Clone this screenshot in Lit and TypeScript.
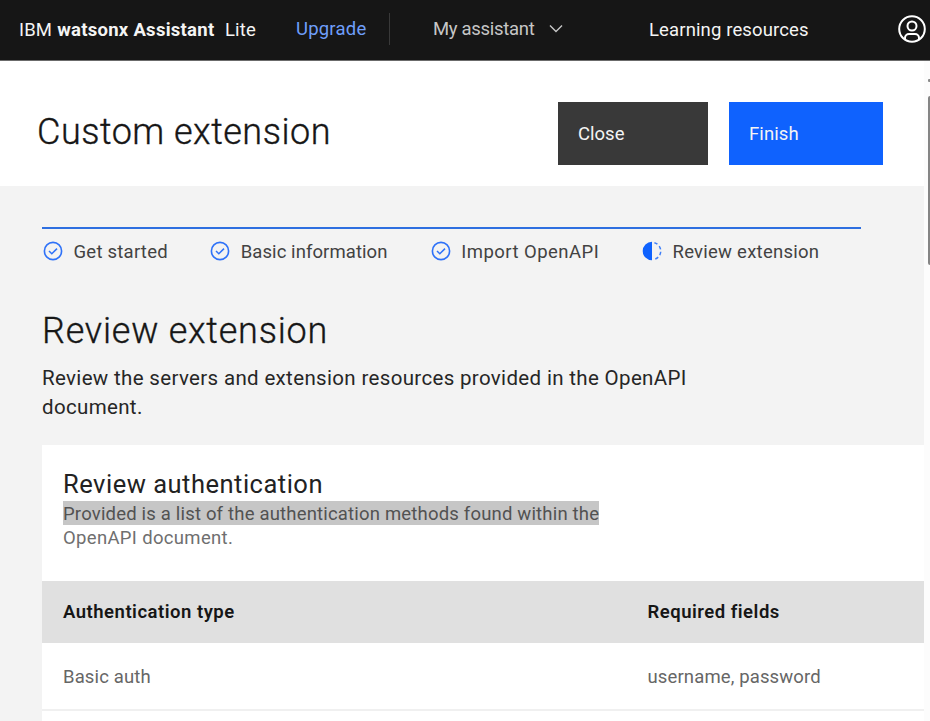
import { LitElement, html, css, svg } from "lit";
import { customElement } from "lit/decorators.js";

const check = svg`<circle cx="10" cy="10" r="8.6" fill="none" stroke="#2f72f8" stroke-width="1.6"/><path d="M6 10 8.8 12.7 14 7.6" fill="none" stroke="#2f72f8" stroke-width="1.5"/>`;
const current = svg`<path d="M10 .7a9.3 9.3 0 0 0 0 18.6z" fill="#0f62fe"/><path d="M12.4 1.7a8.6 8.6 0 0 1 0 16.6" fill="none" stroke="#3f7ff8" stroke-width="1.5" stroke-dasharray="3.4 2.5"/>`;

const steps = [
  { label: "Get started", cls: "s1" },
  { label: "Basic information", cls: "s2" },
  { label: "Import OpenAPI", cls: "s3" },
  { label: "Review extension", cls: "s4" },
];

@customElement("app-root")
export class AppRoot extends LitElement {
  static styles = css`
    :host { display: flex; flex-direction: column; height: 721px; overflow: hidden; background: #fff; color: #161616;
      font-family: Roboto, "Open Sans", sans-serif; font-size: 18.5px; line-height: 24px; white-space: nowrap; }
    * { box-sizing: border-box; }
    svg { display: block; flex: none; }
    header { height: 61px; flex: none; display: flex; align-items: center; background: #161616; border-bottom: 1px solid #6b6b6b; color: #f4f4f4; padding-left: 19px; }
    .brand { width: 277px; display: flex; letter-spacing: .15px; }
    .brand b { margin: 0 10.5px 0 5px; letter-spacing: .27px; }
    .upgrade { color: #6f9ffb; width: 93px; letter-spacing: .2px; padding-bottom: 2px; }
    .switch { border-left: 1px solid #393939; height: 32px; width: 260px; margin-bottom: 3px; padding-left: 43px; display: flex; align-items: center; color: #c6c6c6; gap: 14.5px; letter-spacing: -.3px; }
    .learn { width: 249px; letter-spacing: .13px; }
    .user { margin-bottom: 2px; }
    .body { flex: 1; display: flex; min-height: 0; }
    .scroll { flex: 1; background: #f3f3f3; min-width: 0; overflow: hidden; }
    .gutter { width: 6px; background: #fcfcfc; display: flex; flex-direction: column; align-items: flex-end; overflow: hidden; padding-top: 18px; }
    .arrow { width: 2px; height: 3px; background: #8b8b8b; border-radius: 1px 0 0 1px; }
    .thumb { width: 2px; height: 169px; background: #858585; margin-top: 14px; border-radius: 2px 0 0 2px; }
    .title { height: 125px; background: #fff; display: flex; align-items: center; padding: 20px 41px 0 37px; }
    h1, h2, h3, p { margin: 0; font-weight: 400; }
    h1, h2 { font-size: 36px; line-height: 44px; font-weight: 300; -webkit-text-stroke: .35px #161616; }
    h1 { flex: 1; letter-spacing: .5px; padding-bottom: 4px; }
    h2 { letter-spacing: .78px; }
    .btn { height: 63px; width: 150px; background: #393939; color: #f4f4f4; padding-left: 20px; display: flex; align-items: center; }
    .primary { width: 154px; margin-left: 21px; background: #0f62fe; letter-spacing: .1px; }
    .content { padding: 41px 0 0 42px; }
    .steps { width: 819px; border-top: 2px solid #2e6fe0; display: flex; padding: 11px 0 0 1px; height: 82px; color: #424242; }
    .step { display: flex; gap: 10.5px; }
    .step svg { margin-top: 1px; }
    .s1 { width: 167.2px; letter-spacing: .24px; }
    .s2 { width: 220.5px; letter-spacing: .08px; }
    .s3 { width: 211.3px; letter-spacing: .47px; }
    .s4 { letter-spacing: .25px; }
    .lead { color: #262626; font-size: 20.5px; line-height: 29px; margin-top: 11px; width: 680px; white-space: normal; letter-spacing: .34px; }
    .card { background: #fff; margin-top: 23px; height: 290px; }
    .intro { height: 136px; padding: 23px 0 0 21px; color: #6f6f6f; }
    h3 { font-size: 25.5px; line-height: 33px; color: #222; letter-spacing: .5px; }
    mark { background: #c6c6c6; color: #525252; display: block; width: max-content; height: 24px; line-height: 26px; letter-spacing: .185px; }
    .rest { letter-spacing: .33px; line-height: 26px; }
    .row { display: grid; grid-template-columns: 584.5px 1fr; align-items: center; padding: 2px 0 0 21px; height: 68px; border-bottom: 2px solid #f0f0f0; color: #666; letter-spacing: .13px; }
    .head { height: 62px; background: #e0e0e0; border: 0; color: #161616; font-weight: 600; letter-spacing: .5px; padding-top: 0; }
  `;

  render() {
    return html`
      <header>
        <div class="brand"><span>IBM</span><b>watsonx Assistant</b><span>Lite</span></div>
        <div class="upgrade">Upgrade</div>
        <div class="switch">My assistant
          <svg width="14" height="9"><path d="M1 1.5 7 7.5 13 1.5" fill="none" stroke="#c6c6c6" stroke-width="1.4"/></svg>
        </div>
        <div class="learn">Learning resources</div>
        <svg class="user" width="28" height="28" viewBox="0 0 28 28" fill="none" stroke="#fff" stroke-width="2">
          <circle cx="14" cy="14" r="12.8"/><circle cx="14" cy="11" r="4.5"/><path d="M7 24v-1a4 4 0 0 1 4-4h6a4 4 0 0 1 4 4v1"/>
        </svg>
      </header>
      <div class="body">
        <div class="scroll">
          <div class="title">
            <h1>Custom extension</h1>
            <div class="btn">Close</div>
            <div class="btn primary">Finish</div>
          </div>
          <div class="content">
            <div class="steps">
              ${steps.map((s, i) => html`
                <div class="step ${s.cls}"><svg width="20" height="20">${i < 3 ? check : current}</svg><span>${s.label}</span></div>`)}
            </div>
            <h2>Review extension</h2>
            <p class="lead">Review the servers and extension resources provided in the OpenAPI document.</p>
            <div class="card">
              <div class="intro">
                <h3>Review authentication</h3>
                <mark>Provided is a list of the authentication methods found within the</mark>
                <div class="rest">OpenAPI document.</div>
              </div>
              <div class="row head"><span>Authentication type</span><span>Required fields</span></div>
              <div class="row"><span>Basic auth</span><span>username, password</span></div>
            </div>
          </div>
        </div>
        <div class="gutter"><div class="arrow"></div><div class="thumb"></div></div>
      </div>`;
  }
}
